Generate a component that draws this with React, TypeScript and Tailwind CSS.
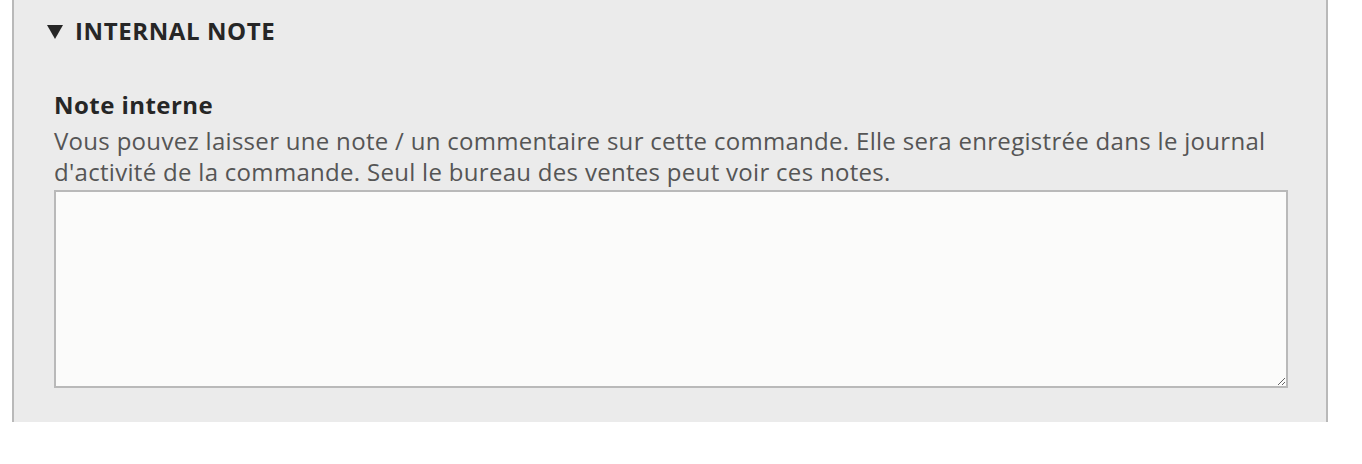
export default function App() {
  return (
    <div className="h-[464px] w-[1362px] bg-white" style={{ fontFamily: '"Open Sans", sans-serif' }}>
      <div className="ml-[12px] w-[1316px] h-[422px] border-x-2 border-[#b9b9b9] bg-[#ebebeb] pl-[33px] pr-[38px] pt-[15px]">
        <div className="flex items-center gap-[12px] text-[24px] font-bold leading-[32px] tracking-[0.6px] text-[#262626]">
          <svg width="16" height="14" viewBox="0 0 16 14" className="mt-[1px]">
            <polygon points="0,0 16,0 8,14" fill="#262626" />
          </svg>
          <span>INTERNAL NOTE</span>
        </div>
        <div className="pl-[7px] pt-[42px]">
          <div className="text-[24px] font-bold leading-[32px] tracking-[0.45px] text-[#262626]">Note interne</div>
          <p className="mt-[4px] text-[24px] leading-[31px] tracking-[0.3px] text-[#555555]">
            Vous pouvez laisser une note / un commentaire sur cette commande. Elle sera enregistrée dans le journal d'activité de la commande. Seul le bureau des ventes peut voir ces notes.
          </p>
          <textarea className="block mt-[3px] h-[198px] w-[1234px] resize-y border-2 border-[#b9b9b9] bg-[#fbfbfa] outline-none" />
        </div>
      </div>
    </div>
  );
}
